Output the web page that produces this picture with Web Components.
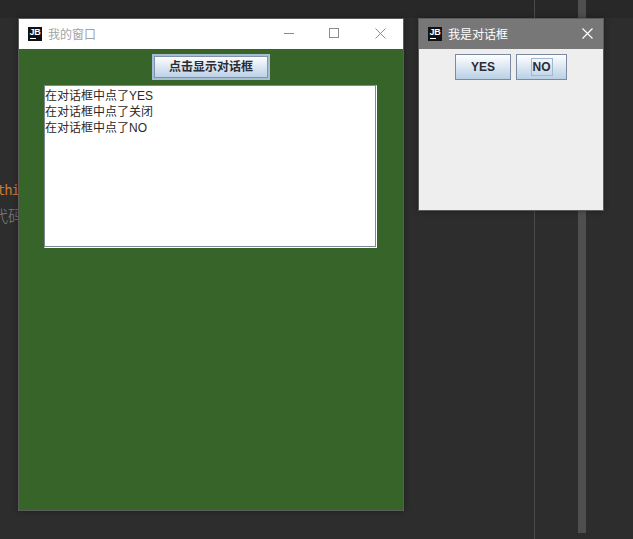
<!DOCTYPE html>
<html>
<head>
<meta charset="utf-8">
<style>
html,body{margin:0;height:100%;background:#2d2d2d;overflow:hidden}
body{width:633px;height:539px;position:relative;font-family:"Liberation Sans","Noto Sans CJK SC",sans-serif}
</style>
</head>
<body>
<ide-backdrop></ide-backdrop>

<desk-window style="left:18px;top:18px;width:384px;height:491px" win-title="我的窗口" body-color="#376529" title-bg="#ffffff" title-color="#a3a3a3" controls>
  <swing-button primary style="margin:5px auto 0;width:118px;height:26px">点击显示对话框</swing-button>
  <log-area style="margin:5px 0 0 25px">
    <div>在对话框中点了YES</div>
    <div>在对话框中点了关闭</div>
    <div>在对话框中点了NO</div>
  </log-area>
</desk-window>

<desk-window style="left:418px;top:18px;width:184px;height:191px" win-title="我是对话框" body-color="#eeeeee" title-bg="#777777" title-color="#ffffff">
  <div style="display:flex;justify-content:center;gap:5px;margin-top:5px">
    <swing-button style="width:56px;height:26px">YES</swing-button>
    <swing-button focused style="width:51px;height:26px">NO</swing-button>
  </div>
</desk-window>

<script>
class IdeBackdrop extends HTMLElement{
  constructor(){
    super()
    const shadow = this.attachShadow({mode:"open"})
    shadow.innerHTML = `
    <style>
      :host{position:absolute;inset:0;display:block;background:#2d2d2d;overflow:hidden}
      .top{height:18px;background:#282828}
      .divider{position:absolute;left:534px;top:0;bottom:0;width:1px;background:#4b4b4b}
      .thumb{position:absolute;left:578px;top:0;width:8px;height:533px;background:#4f4f4f}
      .code{position:absolute;white-space:nowrap;line-height:20px}
      .a{left:-3px;top:180px;font-size:14px;letter-spacing:-1.2px;color:#cc7832;font-family:"DejaVu Sans Mono",monospace}
      .b{left:-8px;top:205px;font-size:16px;color:#7d7d7d;font-family:"Noto Sans CJK SC",sans-serif;font-weight:300}
    </style>
    <div class="top"></div>
    <div class="divider"></div>
    <div class="thumb"></div>
    <div class="code a">thi</div>
    <div class="code b">代码</div>`
  }
}
customElements.define("ide-backdrop",IdeBackdrop)

class DeskWindow extends HTMLElement{
  constructor(){
    super()
    const shadow = this.attachShadow({mode:"open"})
    const title = this.getAttribute("win-title")
    const controls = this.hasAttribute("controls") ? `
      <svg class="ctl" width="120" height="30" viewBox="0 0 120 30" fill="none" stroke="#8c8c8c">
        <path d="M1 14.5h10"/>
        <rect x="46.5" y="9.5" width="9" height="9"/>
        <path d="M92.5 9.5l10 10M102.5 9.5l-10 10"/>
      </svg>` : `
      <svg class="ctl" width="30" height="30" viewBox="0 0 30 30" fill="none" stroke="#ffffff" stroke-width="1.2">
        <path d="M9.5 9.5l10 10M19.5 9.5l-10 10"/>
      </svg>`
    shadow.innerHTML = `
    <style>
      :host{position:absolute;display:flex;flex-direction:column;box-sizing:content-box;
        border:1px solid #5c5c5c;box-shadow:0 0 6px rgba(0,0,0,.35)}
      .bar{height:30px;flex:none;display:flex;align-items:center;padding-left:9px;
        background:${this.getAttribute("title-bg")};color:${this.getAttribute("title-color")};font-size:12px}
      .logo{width:14px;height:14px;background:#111;color:#fff;font:bold 9px/10px "Liberation Sans",sans-serif;
        text-align:center;position:relative;margin-right:6px;flex:none;margin-top:-1px;letter-spacing:-.2px}
      .logo::after{content:"";position:absolute;left:2px;bottom:2px;width:6px;height:1px;background:#fff}
      .name{flex:1;margin-top:-2px}
      .ctl{flex:none}
      .body{flex:1;background:${this.getAttribute("body-color")};display:flex;flex-direction:column;min-height:0}
    </style>
    <div class="bar"><span class="logo">JB</span><span class="name">${title}</span>${controls}</div>
    <div class="body"><slot></slot></div>`
  }
}
customElements.define("desk-window",DeskWindow)

class SwingButton extends HTMLElement{
  constructor(){
    super()
    const shadow = this.attachShadow({mode:"open"})
    shadow.innerHTML = `
    <style>
      :host{display:block;box-sizing:border-box;border:1px solid #7a8aa0;
        background:linear-gradient(#ffffff,#e6eef6 35%,#b9d0e6);
        font:bold 12px/24px "Liberation Sans","Noto Sans CJK SC",sans-serif;color:#2b2b33;text-align:center}
      :host([primary]){font-size:12px;box-shadow:inset 0 0 0 1px #7f93ad;border:2px solid #a9bdd2;line-height:22px}
      .f{display:inline-block;line-height:16px;padding:0 1px}
      :host([focused]) .f{outline:1px solid #a3b8cc}
    </style>
    <span class="f"><slot></slot></span>`
  }
}
customElements.define("swing-button",SwingButton)

class LogArea extends HTMLElement{
  constructor(){
    super()
    const shadow = this.attachShadow({mode:"open"})
    shadow.innerHTML = `
    <style>
      :host{display:block;box-sizing:border-box;width:333px;height:163px;background:#fff;
        border:1px solid #fff;border-top-color:#7d8a96;border-left-color:#7d8a96;
        box-shadow:inset -1px -1px 0 #7d8a96;padding-top:2px;
        font:12px/16px "Liberation Sans","Noto Sans CJK SC",sans-serif;color:#2a2a2a}
    </style>
    <slot></slot>`
  }
}
customElements.define("log-area",LogArea)
</script>
</body>
</html>
